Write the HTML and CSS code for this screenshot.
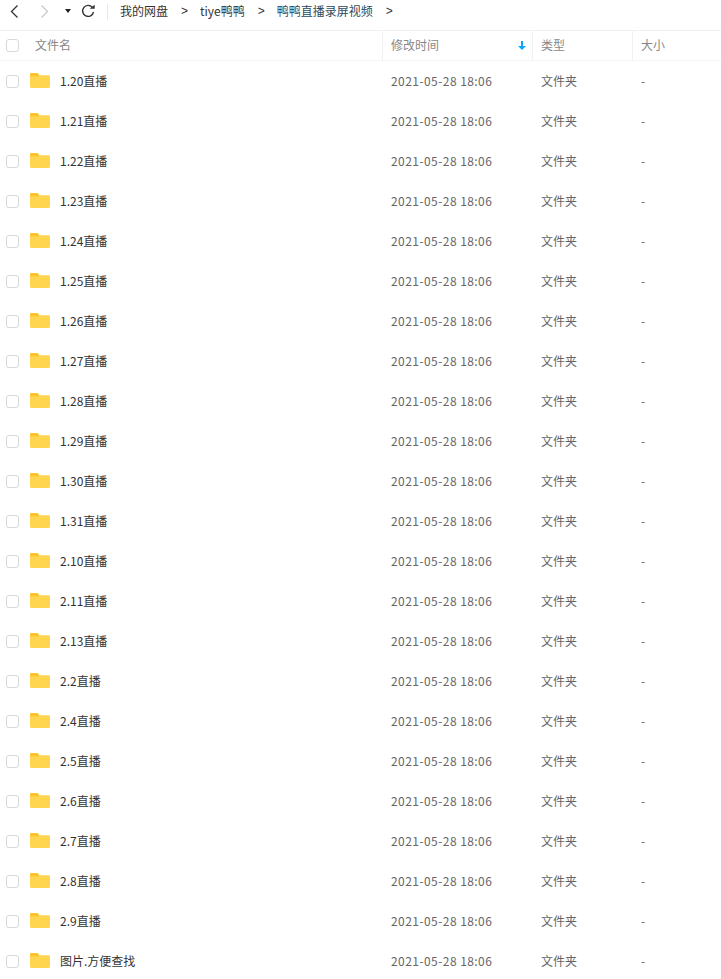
FILE: index.html
```html
<!DOCTYPE html>
<html lang="zh-CN">
<head>
    <meta charset="UTF-8">
    <title>鸭鸭直播录屏视频</title>
    <link rel="stylesheet" href="styles.css">
</head>
<body>
    <svg class="defs" width="0" height="0">
        <symbol id="folder" viewBox="0 0 20 15">
            <path d="M0 1.500C0 .6.6 0 1.500 0h5.200c.5 0 .9.2 1.200.6L9.300 2.200H18.500C19.400 2.200 20 2.800 20 3.700V13.500C20 14.400 19.400 15 18.500 15H1.500C.6 15 0 14.400 0 13.500Z" fill="#ffd54f"/>
            <path d="M0 1.500C0 .6.6 0 1.500 0h5.200c.5 0 .9.2 1.200.6L9.300 2.200 8 3.300H0Z" fill="#fcc42c"/>
        </symbol>
    </svg>

    <div class="toolbar">
        <svg class="nav-icon" width="12" height="16" viewBox="0 0 12 16"><path d="M8.500 2.500l-6 6 6 6" fill="none" stroke="#333" stroke-width="1.300"/></svg>
        <svg class="nav-icon forward" width="12" height="16" viewBox="0 0 12 16"><path d="M2.500 2.500l6 6-6 6" fill="none" stroke="#c8c8c8" stroke-width="1.300"/></svg>
        <span class="caret"></span>
        <svg class="refresh" width="14" height="14" viewBox="0 0 14 14"><path d="M11.300 3.300A5.500 5.500 0 1 0 12.500 8" fill="none" stroke="#333" stroke-width="1.400"/><path d="M8.700 4.800h5V.8Z" fill="#333"/></svg>
        <span class="divider"></span>
        <nav class="crumbs">
            <a>我的网盘</a><span class="sep">&gt;</span>
            <a>tiye鸭鸭</a><span class="sep">&gt;</span>
            <a class="current">鸭鸭直播录屏视频</a><span class="sep">&gt;</span>
        </nav>
    </div>

    <div class="table-head">
        <div class="cell-name"><span class="check"></span><span class="head-label">文件名</span></div>
        <div class="cell-col sorted">修改时间
            <svg class="sort" width="8" height="9" viewBox="0 0 8 9"><path d="M3 0h2v5h3L4 9 0 5h3Z" fill="#06a7ff"/></svg>
        </div>
        <div class="cell-col">类型</div>
        <div class="cell-col">大小</div>
    </div>

    <div class="file-list">
        <div class="file-row"><div class="cell-name"><span class="check"></span><svg class="folder"><use href="#folder"/></svg><span class="file-name">1.20直播</span></div><div class="cell-col">2021-05-28 18:06</div><div class="cell-col">文件夹</div><div class="cell-col">-</div></div>
        <div class="file-row"><div class="cell-name"><span class="check"></span><svg class="folder"><use href="#folder"/></svg><span class="file-name">1.21直播</span></div><div class="cell-col">2021-05-28 18:06</div><div class="cell-col">文件夹</div><div class="cell-col">-</div></div>
        <div class="file-row"><div class="cell-name"><span class="check"></span><svg class="folder"><use href="#folder"/></svg><span class="file-name">1.22直播</span></div><div class="cell-col">2021-05-28 18:06</div><div class="cell-col">文件夹</div><div class="cell-col">-</div></div>
        <div class="file-row"><div class="cell-name"><span class="check"></span><svg class="folder"><use href="#folder"/></svg><span class="file-name">1.23直播</span></div><div class="cell-col">2021-05-28 18:06</div><div class="cell-col">文件夹</div><div class="cell-col">-</div></div>
        <div class="file-row"><div class="cell-name"><span class="check"></span><svg class="folder"><use href="#folder"/></svg><span class="file-name">1.24直播</span></div><div class="cell-col">2021-05-28 18:06</div><div class="cell-col">文件夹</div><div class="cell-col">-</div></div>
        <div class="file-row"><div class="cell-name"><span class="check"></span><svg class="folder"><use href="#folder"/></svg><span class="file-name">1.25直播</span></div><div class="cell-col">2021-05-28 18:06</div><div class="cell-col">文件夹</div><div class="cell-col">-</div></div>
        <div class="file-row"><div class="cell-name"><span class="check"></span><svg class="folder"><use href="#folder"/></svg><span class="file-name">1.26直播</span></div><div class="cell-col">2021-05-28 18:06</div><div class="cell-col">文件夹</div><div class="cell-col">-</div></div>
        <div class="file-row"><div class="cell-name"><span class="check"></span><svg class="folder"><use href="#folder"/></svg><span class="file-name">1.27直播</span></div><div class="cell-col">2021-05-28 18:06</div><div class="cell-col">文件夹</div><div class="cell-col">-</div></div>
        <div class="file-row"><div class="cell-name"><span class="check"></span><svg class="folder"><use href="#folder"/></svg><span class="file-name">1.28直播</span></div><div class="cell-col">2021-05-28 18:06</div><div class="cell-col">文件夹</div><div class="cell-col">-</div></div>
        <div class="file-row"><div class="cell-name"><span class="check"></span><svg class="folder"><use href="#folder"/></svg><span class="file-name">1.29直播</span></div><div class="cell-col">2021-05-28 18:06</div><div class="cell-col">文件夹</div><div class="cell-col">-</div></div>
        <div class="file-row"><div class="cell-name"><span class="check"></span><svg class="folder"><use href="#folder"/></svg><span class="file-name">1.30直播</span></div><div class="cell-col">2021-05-28 18:06</div><div class="cell-col">文件夹</div><div class="cell-col">-</div></div>
        <div class="file-row"><div class="cell-name"><span class="check"></span><svg class="folder"><use href="#folder"/></svg><span class="file-name">1.31直播</span></div><div class="cell-col">2021-05-28 18:06</div><div class="cell-col">文件夹</div><div class="cell-col">-</div></div>
        <div class="file-row"><div class="cell-name"><span class="check"></span><svg class="folder"><use href="#folder"/></svg><span class="file-name">2.10直播</span></div><div class="cell-col">2021-05-28 18:06</div><div class="cell-col">文件夹</div><div class="cell-col">-</div></div>
        <div class="file-row"><div class="cell-name"><span class="check"></span><svg class="folder"><use href="#folder"/></svg><span class="file-name">2.11直播</span></div><div class="cell-col">2021-05-28 18:06</div><div class="cell-col">文件夹</div><div class="cell-col">-</div></div>
        <div class="file-row"><div class="cell-name"><span class="check"></span><svg class="folder"><use href="#folder"/></svg><span class="file-name">2.13直播</span></div><div class="cell-col">2021-05-28 18:06</div><div class="cell-col">文件夹</div><div class="cell-col">-</div></div>
        <div class="file-row"><div class="cell-name"><span class="check"></span><svg class="folder"><use href="#folder"/></svg><span class="file-name">2.2直播</span></div><div class="cell-col">2021-05-28 18:06</div><div class="cell-col">文件夹</div><div class="cell-col">-</div></div>
        <div class="file-row"><div class="cell-name"><span class="check"></span><svg class="folder"><use href="#folder"/></svg><span class="file-name">2.4直播</span></div><div class="cell-col">2021-05-28 18:06</div><div class="cell-col">文件夹</div><div class="cell-col">-</div></div>
        <div class="file-row"><div class="cell-name"><span class="check"></span><svg class="folder"><use href="#folder"/></svg><span class="file-name">2.5直播</span></div><div class="cell-col">2021-05-28 18:06</div><div class="cell-col">文件夹</div><div class="cell-col">-</div></div>
        <div class="file-row"><div class="cell-name"><span class="check"></span><svg class="folder"><use href="#folder"/></svg><span class="file-name">2.6直播</span></div><div class="cell-col">2021-05-28 18:06</div><div class="cell-col">文件夹</div><div class="cell-col">-</div></div>
        <div class="file-row"><div class="cell-name"><span class="check"></span><svg class="folder"><use href="#folder"/></svg><span class="file-name">2.7直播</span></div><div class="cell-col">2021-05-28 18:06</div><div class="cell-col">文件夹</div><div class="cell-col">-</div></div>
        <div class="file-row"><div class="cell-name"><span class="check"></span><svg class="folder"><use href="#folder"/></svg><span class="file-name">2.8直播</span></div><div class="cell-col">2021-05-28 18:06</div><div class="cell-col">文件夹</div><div class="cell-col">-</div></div>
        <div class="file-row"><div class="cell-name"><span class="check"></span><svg class="folder"><use href="#folder"/></svg><span class="file-name">2.9直播</span></div><div class="cell-col">2021-05-28 18:06</div><div class="cell-col">文件夹</div><div class="cell-col">-</div></div>
        <div class="file-row"><div class="cell-name"><span class="check"></span><svg class="folder"><use href="#folder"/></svg><span class="file-name">图片.方便查找</span></div><div class="cell-col">2021-05-28 18:06</div><div class="cell-col">文件夹</div><div class="cell-col">-</div></div>
    </div>
</body>
</html>
```
FILE: styles.css
```css
html, body {
    height: 979px;
    overflow: hidden;
}
body {
    margin: 0;
    background-color: #fff;
    color: #666;
    font-family: "Noto Sans CJK SC", "Noto Sans", sans-serif;
    font-size: 12px;
}
.defs {
    display: block;
    height: 0;
}

/* Top bar */
.toolbar {
    display: flex;
    align-items: center;
    height: 21px;
    padding: 0 0 9px 9px;
    border-bottom: 1px solid #f1f1f1;
}
.nav-icon.forward {
    margin-left: 18px;
}
.caret {
    width: 0;
    height: 0;
    margin-left: 14px;
    border-left: 3px solid transparent;
    border-right: 3px solid transparent;
    border-top: 4px solid #222;
}
.refresh {
    margin-left: 10px;
}
.divider {
    width: 1px;
    height: 16px;
    margin-top: 3px;
    margin-left: 12px;
    background-color: #e8e8e8;
}
.crumbs {
    display: flex;
    align-items: center;
    margin-left: 12px;
    color: #333;
}
.crumbs .current {
    color: #2a4a5e;
}
.sep {
    margin: 0 12px 0 13px;
    font-family: "Liberation Sans", sans-serif;
}

/* Table, shared columns */
.table-head, .file-row {
    display: grid;
    grid-template-columns: 382px 150px 100px 89px;
    align-items: center;
}
.table-head {
    height: 29px;
    border-bottom: 1px solid #f4f4f4;
}
.table-head .cell-col {
    position: relative;
    height: 29px;
    line-height: 27px;
    padding-left: 8px;
    border-left: 1px solid #f1f1f1;
    color: #888;
}
.cell-name {
    display: flex;
    align-items: center;
    padding-left: 6px;
}
.check {
    box-sizing: border-box;
    width: 13px;
    height: 13px;
    border: 1px solid #d8d8d8;
    border-radius: 3px;
}
.head-label {
    margin-left: 16px;
    padding-bottom: 2px;
    color: #888;
}
.sort {
    position: absolute;
    right: 6px;
    top: 10px;
}

/* Rows */
.file-row {
    height: 40px;
}
.file-row .cell-col {
    padding: 0 0 2px 9px;
}
.file-row .cell-col:nth-child(2) {
    letter-spacing: 0.44px;
}
.folder {
    width: 20px;
    height: 15px;
    margin-left: 11px;
    margin-top: -2px;
}
.file-name {
    margin-left: 10px;
    padding-bottom: 2px;
    color: #333;
}
```
